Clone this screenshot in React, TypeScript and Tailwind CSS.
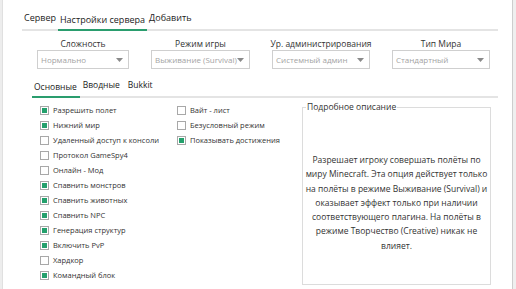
import React from "react";

const left: [string, boolean][] = [
  ["Разрешить полет", true],
  ["Нижний мир", true],
  ["Удаленный доступ к консоли", false],
  ["Протокол GameSpy4", false],
  ["Онлайн - Мод", false],
  ["Спавнить монстров", true],
  ["Спавнить животных", true],
  ["Спавнить NPC", true],
  ["Генерация структур", true],
  ["Включить PvP", true],
  ["Хардкор", false],
  ["Командный блок", true],
];

const mid: [string, boolean][] = [
  ["Вайт - лист", false],
  ["Безусловный режим", false],
  ["Показывать достижения", true],
];

function Check({ label, on }: { label: string; on: boolean }) {
  return (
    <div className="flex items-center h-[15px] gap-[4px]">
      <span className="w-[9px] h-[9px] border border-[#a8a8a8] p-[1px] flex bg-white">
        {on && <span className="flex-1 bg-[#23a06c]" />}
      </span>
      <span className="text-[7.5px] leading-[15px] text-[#333] whitespace-nowrap">{label}</span>
    </div>
  );
}

function Drop({ label, value, w }: { label: string; value: string; w: string }) {
  return (
    <div className={`flex flex-col items-center ${w}`}>
      <div className="h-[12px] leading-[12px] text-[8.5px] text-[#333] whitespace-nowrap">{label}</div>
      <div className="w-full h-[19px] border border-[#cfcfcf] flex items-center pl-[3px] pr-[5px] bg-white">
        <span className="flex-1 min-w-0 text-[8px] text-[#a3a3a3] whitespace-nowrap">{value}</span>
        <svg className="shrink-0" width="7" height="4" viewBox="0 0 7 4"><path d="M0 0h7L3.5 4z" fill="#8a8a8a" /></svg>
      </div>
    </div>
  );
}

export default function App() {
  return (
    <div className="w-[516px] h-[289px] flex bg-white overflow-hidden font-['Open_Sans','Noto_Sans',sans-serif]">
      <div className="w-[3px] bg-[#ededed] border-r border-[#e0e0e0]" />
      <div className="flex-1 flex flex-col pt-[11px]">
        <div className="ml-[19px] mr-[14px] flex items-end border-b-2 border-[#e4e4e4] text-[9px] text-[#222]">
          <div className="px-[2px] leading-[14px] pb-[4px]">Сервер</div>
          <div className="px-[2px] leading-[14px] pb-[2px] border-b-2 border-[#2a9d6e] -mb-[2px]">Настройки сервера</div>
          <div className="px-[2px] leading-[14px] pb-[4px]">Добавить</div>
        </div>
        <div className="mt-[7px] ml-[34px] flex gap-[22px]">
          <Drop label="Сложность" value="Нормально" w="w-[92px]" />
          <Drop label="Режим игры" value="Выживание (Survival)" w="w-[99px]" />
          <Drop label="Ур. администрирования" value="Системный админ" w="w-[98px]" />
          <Drop label="Тип Мира" value="Стандартный" w="w-[98px]" />
        </div>
        <div className="mt-[9px] ml-[29px] mr-[14px] flex items-end border-b-2 border-[#e4e4e4] text-[8.5px] text-[#222]">
          <div className="px-[2px] pr-[3px] leading-[14px] pb-[2px] border-b-2 border-[#2a9d6e] -mb-[2px]">Основные</div>
          <div className="px-[2px] leading-[14px] pb-[4px] ml-[1px]">Вводные</div>
          <div className="px-[2px] leading-[14px] pb-[4px] ml-[4px]">Bukkit</div>
        </div>
        <div className="flex pt-[5px]">
          <div className="ml-[37px] w-[137px] flex flex-col">
            {left.map(([l, o]) => (
              <Check key={l} label={l} on={o} />
            ))}
          </div>
          <div className="w-[125px] flex flex-col">
            {mid.map(([l, o]) => (
              <Check key={l} label={l} on={o} />
            ))}
          </div>
          <fieldset className="w-[189px] h-[183px] -mt-[1px] border border-[#dcdcdc] flex flex-col">
            <legend className="ml-[3px] px-[1px] text-[8.5px] leading-[10px] text-[#333]">Подробное описание</legend>
            <div className="flex-1 flex items-center justify-center">
              <p className="text-center text-[8.5px] leading-[14.3px] text-[#333] mt-[10px]">
                Разрешает игроку совершать полёты по<br />
                миру Minecraft. Эта опция действует только<br />
                на полёты в режиме Выживание (Survival) и<br />
                оказывает эффект только при наличии<br />
                соответствующего плагина. На полёты в<br />
                режиме Творчество (Creative) никак не<br />
                влияет.
              </p>
            </div>
          </fieldset>
        </div>
      </div>
      <div className="w-[4px] border-l border-[#cdcdcd] bg-[#efefef]" />
    </div>
  );
}
